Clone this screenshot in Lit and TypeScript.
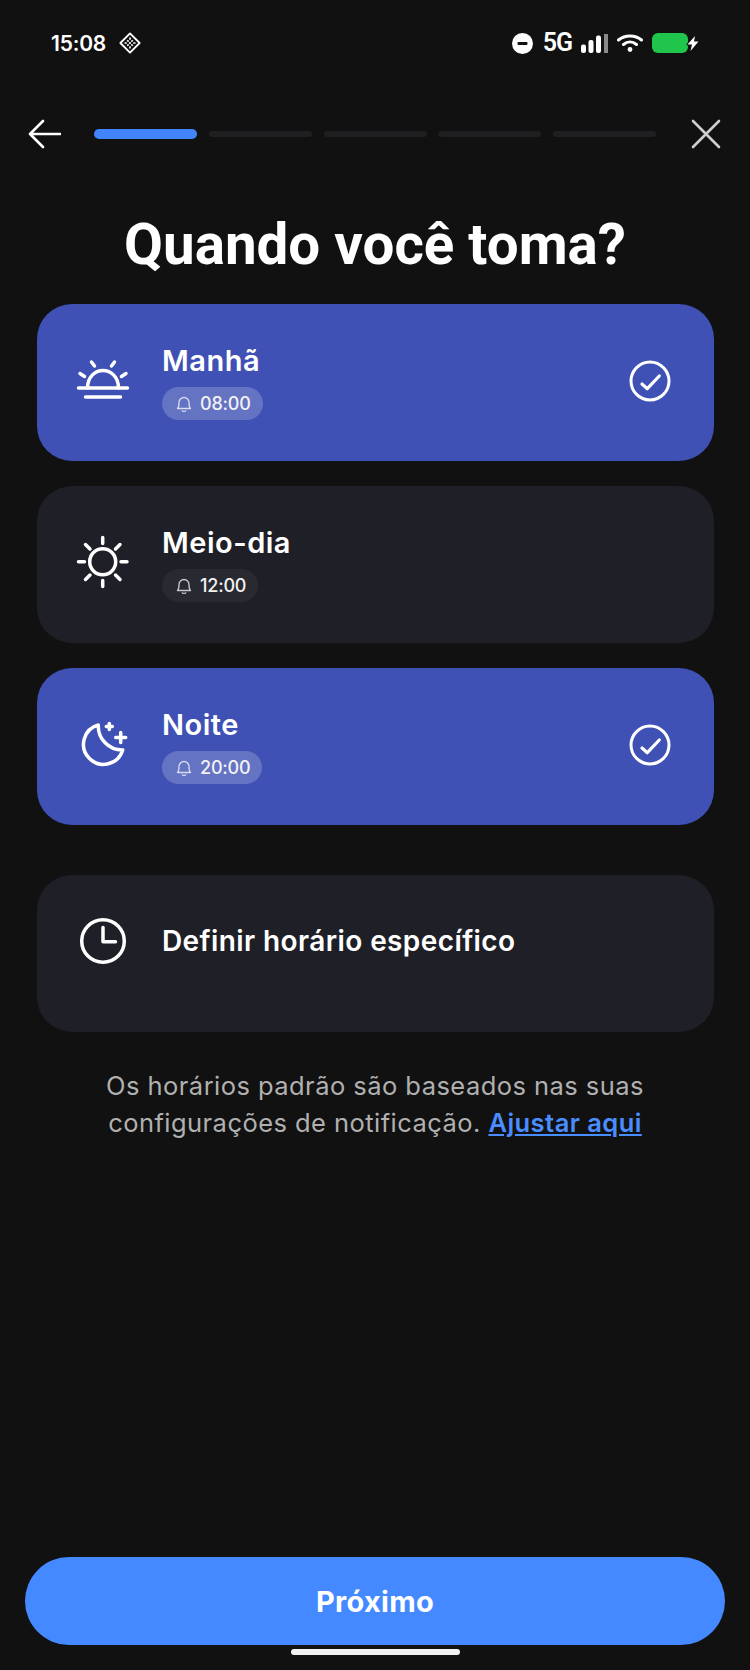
import { LitElement, html, css, svg } from "lit";
import { customElement } from "lit/decorators.js";

const sunrise = svg`<path d="M24.500 54C24.500 43 32 36.500 40 36.500S55.500 43 55.500 54"/><path d="M15.500 54h49M22.500 63h35"/><path d="M28.500 28l3 4M51.500 28l-3 4M17 39.500l4.500 3M63 39.500l-4.500 3"/>`;
const sun = svg`<circle cx="39.700" cy="45.700" r="13"/><path d="M39.700 21.500v6M39.700 64.500v6M15.500 45.700h6M58 45.700h6M22.500 28.500l4.500 4.500M57 28.500l-4.500 4.500M22.500 63.500l4.500-4.500M57 63.500l-4.500-4.500"/>`;
const moon = svg`<path d="M35.300 27A20 20 0 1 0 59.700 52 24 24 0 0 1 35.300 27z"/><path d="M46.300 25.500v6M43.300 28.500h6M57.700 34.500v10M52.700 39.500h10"/>`;
const clock = svg`<circle cx="40" cy="36" r="21.300"/><path d="M40 22.500v14.200h12.500"/>`;

@customElement("app-root")
export class AppRoot extends LitElement {
  static styles = css`
    :host { display: flex; flex-direction: column; width: 750px; height: 1670px; background: #111111; color: #fff; font-family: Inter, "Noto Sans", sans-serif; overflow: hidden; }
    .status { height: 86px; padding: 0 51px; display: flex; align-items: center; justify-content: space-between; box-sizing: border-box; }
    .left, .right { display: flex; align-items: center; }
    .time { font: 600 21px Inter, sans-serif; letter-spacing: -.2px; }
    .diamond { margin-left: 13px; }
    .g5 { font: 600 25px/26px Roboto, sans-serif; margin: 0 9px 0 10px; letter-spacing: -1px; }
    .ml9 { margin-left: 9px; }
    .head { height: 50px; margin-top: 23px; display: flex; align-items: center; padding-left: 28px; }
    .head svg { flex: none; }
    .bars { display: flex; align-items: center; gap: 11.750px; margin-left: 33px; margin-right: 35px; }
    .bar { width: 103px; height: 6px; border-radius: 3px; background: #1f1f21; }
    .bar.on { height: 10px; border-radius: 5px; background: #4285fa; }
    h1 { margin: 56px 0 0; text-align: center; font: 700 56.500px/60px Roboto, sans-serif; }
    .list { margin: 29px 36px 0 37px; display: flex; flex-direction: column; }
    .card { height: 157px; box-sizing: border-box; border-radius: 35px; background: #1f1f28; display: flex; padding-left: 26px; position: relative; margin-bottom: 25px; }
    .card.on { background: #3f51b5; }
    .card.gap { margin-top: 25px; margin-bottom: 0; }
    .ic { flex: none; margin-top: 30px; }
    .body { margin-left: 19px; padding-top: 39px; }
    .body.single { padding-top: 48px; }
    .t { font: 600 29px/36px Inter, sans-serif; letter-spacing: .5px; }
    .t.long { font-size: 28px; letter-spacing: .4px; }
    .pill { margin-top: 8px; height: 33px; padding: 0 12px 0 14px; border-radius: 17px; display: inline-flex; align-items: center; gap: 8px; font: 500 18px Inter, sans-serif; letter-spacing: -.2px; background: #292932; color: #f2f2f2; }
    .on .pill { background: rgba(255,255,255,.2); }
    .pill svg { opacity: .75; }
    .check { position: absolute; right: 42px; top: 55px; }
    .note { margin: 35px 30px 0; text-align: center; font: 400 25.500px/37px Inter, sans-serif; letter-spacing: .45px; color: #b0b0b0; }
    .note a { color: #4a8dff; font-weight: 600; text-decoration: underline; }
    .btn { margin: auto 25px 0; height: 88px; border-radius: 44px; background: #4489ff; display: flex; align-items: center; justify-content: center; font: 700 29px Inter, sans-serif; letter-spacing: .3px; }
    .home { margin: 4px auto 15px; width: 169px; height: 6px; border-radius: 3px; background: #f2f2f2; }
    svg.stroke { fill: none; stroke: #fff; stroke-linecap: round; stroke-linejoin: round; }
    svg.x { stroke: #cfcfcf; }
  `;

  private bell() {
    return html`<svg width="16" height="18" viewBox="0 0 16 18" fill="none" stroke="#fff" stroke-width="1.300" stroke-linejoin="round"><path d="M1.500 13.500c1.500-1.500 1.500-3 1.500-6a5 5 0 0 1 10 0c0 3 0 4.500 1.500 6z"/><path d="M6 15.500c.5 1.300 3.500 1.300 4 0"/></svg>`;
  }

  private card(icon: unknown, title: string, time: string, on: boolean) {
    return html`<div class="card ${on ? "on" : ""}">
      <svg class="stroke ic" width="80" height="80" viewBox="0 0 80 80" stroke-width="3.500">${icon}</svg>
      <div class="body"><div class="t">${title}</div><div class="pill">${this.bell()}${time}</div></div>
      ${on ? html`<svg class="stroke check" width="44" height="44" viewBox="0 0 44 44" stroke-width="3"><circle cx="22" cy="22" r="19"/><path d="M14 25l5.300 4.700L31.300 17" stroke-width="3.200"/></svg>` : ""}
    </div>`;
  }

  render() {
    return html`
      <div class="status">
        <div class="left"><span class="time">15:08</span>
          <svg class="diamond" width="22" height="22" viewBox="0 0 24 24" fill="none" stroke="#fff" stroke-width="2"><path d="M12 1.500L22.500 12 12 22.500 1.500 12z" stroke-linejoin="round"/><path d="M12 6v2.500M12 10.800v2.400M12 15.500V18M6 12h2.500M15.500 12H18M9 9l1.500 1.500M15 9l-1.500 1.500M9 15l1.500-1.500M15 15l-1.500-1.500" stroke-width="1.800"/></svg>
        </div>
        <div class="right">
          <svg width="21" height="21" viewBox="0 0 21 21"><circle cx="10.500" cy="10.500" r="10.500" fill="#fff"/><rect x="5.500" y="9" width="10" height="3" rx="1" fill="#111"/></svg>
          <span class="g5">5G</span>
          <svg width="27" height="19" viewBox="0 0 27 19"><rect x="0" y="10.500" width="5" height="8.500" rx="2" fill="#fff"/><rect x="7.500" y="6" width="5" height="13" rx="2" fill="#fff"/><rect x="15" y="1.500" width="5" height="17.500" rx="2" fill="#fff"/><rect x="23" y="0" width="4" height="19" fill="#8a8a8a"/></svg>
          <svg class="ml9" width="26" height="18" viewBox="0 0 26 18" fill="none" stroke="#fff" stroke-width="3" stroke-linecap="round"><path d="M1.500 6C8 .5 18 .5 24.500 6M6.500 10.500C10.500 7 15.500 7 19.500 10.500"/><circle cx="13" cy="15.500" r="2.400" fill="#fff" stroke="none"/></svg>
          <svg class="ml9" width="47" height="20" viewBox="0 0 47 20"><rect x="0" y="0" width="36" height="20" rx="6" fill="#1fc64b"/><path d="M43 3L35.500 11.500H40L38.500 18 46.500 8.500H42z" fill="#fff" stroke="#111" stroke-width="2" stroke-linejoin="round" paint-order="stroke"/></svg>
        </div>
      </div>
      <div class="head">
        <svg class="stroke" width="33" height="30" viewBox="0 0 33 30" stroke-width="2.600"><path d="M32 15H2M15 2L2 15l13 13"/></svg>
        <div class="bars"><div class="bar on"></div><div class="bar"></div><div class="bar"></div><div class="bar"></div><div class="bar"></div></div>
        <svg class="stroke x" width="30" height="30" viewBox="0 0 30 30" stroke-width="2.600"><path d="M2 2l26 26M28 2L2 28"/></svg>
      </div>
      <h1>Quando você toma?</h1>
      <div class="list">
        ${this.card(sunrise, "Manhã", "08:00", true)}
        ${this.card(sun, "Meio-dia", "12:00", false)}
        ${this.card(moon, "Noite", "20:00", true)}
        <div class="card gap">
          <svg class="stroke ic" width="80" height="80" viewBox="0 0 80 80" stroke-width="3.500">${clock}</svg>
          <div class="body single"><div class="t long">Definir horário específico</div></div>
        </div>
      </div>
      <div class="note">Os horários padrão são baseados nas suas<br>configurações de notificação. <a>Ajustar aqui</a></div>
      <div class="btn">Próximo</div>
      <div class="home"></div>
    `;
  }
}
